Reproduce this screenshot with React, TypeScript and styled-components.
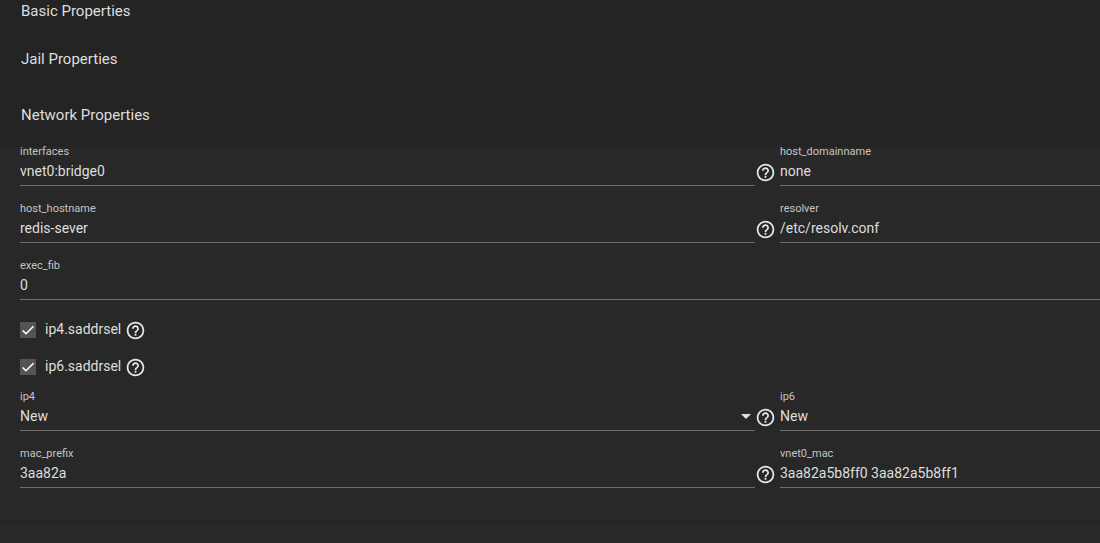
import React, { useId } from "react";
import styled, { createGlobalStyle } from "styled-components";

const GlobalStyle = createGlobalStyle`
  * { box-sizing: border-box; }
  body {
    margin: 0;
    background: #282828;
    color: #dedede;
    font: 14px/20px Roboto, sans-serif;
    overflow-x: hidden;
  }
`;

const SectionHeader = styled.button<{ $size: "clipped" | "closed" | "open" }>`
  display: flex;
  align-items: center;
  width: 100%;
  height: ${(p) => (p.$size === "open" ? 64 : p.$size === "closed" ? 48 : 35)}px;
  padding: 0 21px ${(p) => (p.$size === "clipped" ? 12 : 0)}px;
  border: 0;
  border-bottom: ${(p) => (p.$size === "open" ? "0" : "1px solid #222")};
  background: #242424;
  color: #dedede;
  font: 15px/20px Roboto, sans-serif;
  text-align: left;
`;

const Panel = styled.form`
  display: flex;
  flex-direction: column;
  gap: 18px;
  padding: 0 0 33px 20px;
  border-bottom: 1px solid #212121;
`;

const FieldRow = styled.div`
  display: grid;
  grid-template-columns: minmax(0, 735fr) 21px minmax(0, 324fr);
  align-items: end;
`;

const FieldBox = styled.div<{ $indent?: boolean }>`
  display: flex;
  flex-direction: column;
  gap: 3px;
  height: 39px;
  margin-left: ${(p) => (p.$indent ? 4 : 0)}px;
  border-bottom: 1px solid #6d6d6d;
`;

const FieldLabel = styled.label`
  color: #c4c4c4;
  font-size: 11px;
  line-height: 10px;
`;

const TextInput = styled.input`
  width: 100%;
  height: 22px;
  padding: 0;
  border: 0;
  outline: 0;
  background: transparent;
  color: #dedede;
  font: 14px/22px Roboto, sans-serif;
`;

const SelectBox = styled.div`
  display: flex;
  align-items: center;
  padding-right: 4px;
`;

const SelectInput = styled.select`
  flex: 1;
  height: 22px;
  padding: 0;
  border: 0;
  outline: 0;
  appearance: none;
  background: transparent;
  color: #dedede;
  font: 14px/22px Roboto, sans-serif;
`;

const HelpButton = styled.button`
  display: grid;
  place-items: center;
  width: 21px;
  height: 21px;
  padding: 0;
  border: 0;
  background: transparent;
  color: #e8e8e8;
`;

const HelpCell = styled.div`
  padding-bottom: 3px;
`;

const CheckList = styled.div`
  display: flex;
  flex-direction: column;
  gap: 17px;
  margin-bottom: -3px;
  padding-top: 2px;
`;

const CheckRow = styled.div`
  display: flex;
  align-items: center;
  height: 20px;
`;

const CheckBox = styled.span`
  display: grid;
  width: 16px;
  height: 16px;

  & > * { grid-area: 1 / 1; }
  svg { pointer-events: none; }
`;

const CheckInput = styled.input`
  width: 16px;
  height: 16px;
  margin: 0;
  appearance: none;
  background: #545454;
`;

const CheckLabel = styled.label`
  padding: 0 4px 2px 9px;
`;

function Help({ topic }: { topic: string }) {
  return (
    <HelpButton type="button" aria-label={`Help for ${topic}`}>
      <svg width="21" height="21" viewBox="0 0 24 24" fill="currentColor">
        <path d="M11 18h2v-2h-2v2zm1-16C6.48 2 2 6.48 2 12s4.480 10 10 10 10-4.480 10-10S17.520 2 12 2zm0 18c-4.410 0-8-3.590-8-8s3.590-8 8-8 8 3.590 8 8-3.590 8-8 8zm0-14c-2.210 0-4 1.790-4 4h2c0-1.100.9-2 2-2s2 .9 2 2c0 2-3 1.750-3 5h2c0-2.250 3-2.500 3-5 0-2.210-1.790-4-4-4z" />
      </svg>
    </HelpButton>
  );
}

interface FieldProps {
  name: string;
  value: string;
  indent?: boolean;
}

function TextField({ name, value, indent }: FieldProps) {
  const id = useId();
  return (
    <FieldBox $indent={indent}>
      <FieldLabel htmlFor={id}>{name}</FieldLabel>
      <TextInput id={id} name={name} defaultValue={value} />
    </FieldBox>
  );
}

function SelectField({ name, value, indent, arrow }: FieldProps & { arrow?: boolean }) {
  const id = useId();
  return (
    <FieldBox $indent={indent}>
      <FieldLabel htmlFor={id}>{name}</FieldLabel>
      <SelectBox>
        <SelectInput id={id} name={name} defaultValue={value}>
          <option>{value}</option>
        </SelectInput>
        {arrow && (
          <svg width="10" height="5" viewBox="0 0 10 5" fill="#e0e0e0" aria-hidden="true">
            <path d="M0 0h10L5 5z" />
          </svg>
        )}
      </SelectBox>
    </FieldBox>
  );
}

function CheckField({ name }: { name: string }) {
  const id = useId();
  return (
    <CheckRow>
      <CheckBox>
        <CheckInput type="checkbox" id={id} name={name} defaultChecked />
        <svg width="16" height="16" viewBox="0 0 24 24" fill="none" stroke="#fff" strokeWidth="2.400" aria-hidden="true">
          <path d="M4.100 12.700 9 17.600 20.300 6.300" />
        </svg>
      </CheckBox>
      <CheckLabel htmlFor={id}>{name}</CheckLabel>
      <Help topic={name} />
    </CheckRow>
  );
}

export default function App() {
  return (
    <main>
      <GlobalStyle />
      <SectionHeader type="button" $size="clipped">Basic Properties</SectionHeader>
      <SectionHeader type="button" $size="closed">Jail Properties</SectionHeader>
      <SectionHeader type="button" $size="open" aria-expanded>Network Properties</SectionHeader>
      <Panel>
        <FieldRow>
          <TextField name="interfaces" value="vnet0:bridge0" />
          <HelpCell><Help topic="interfaces" /></HelpCell>
          <TextField name="host_domainname" value="none" indent />
        </FieldRow>
        <FieldRow>
          <TextField name="host_hostname" value="redis-sever" />
          <HelpCell><Help topic="host_hostname" /></HelpCell>
          <TextField name="resolver" value="/etc/resolv.conf" indent />
        </FieldRow>
        <TextField name="exec_fib" value="0" />
        <CheckList>
          <CheckField name="ip4.saddrsel" />
          <CheckField name="ip6.saddrsel" />
        </CheckList>
        <FieldRow>
          <SelectField name="ip4" value="New" arrow />
          <HelpCell><Help topic="ip4" /></HelpCell>
          <SelectField name="ip6" value="New" indent />
        </FieldRow>
        <FieldRow>
          <TextField name="mac_prefix" value="3aa82a" />
          <HelpCell><Help topic="mac_prefix" /></HelpCell>
          <TextField name="vnet0_mac" value="3aa82a5b8ff0 3aa82a5b8ff1" indent />
        </FieldRow>
      </Panel>
    </main>
  );
}
